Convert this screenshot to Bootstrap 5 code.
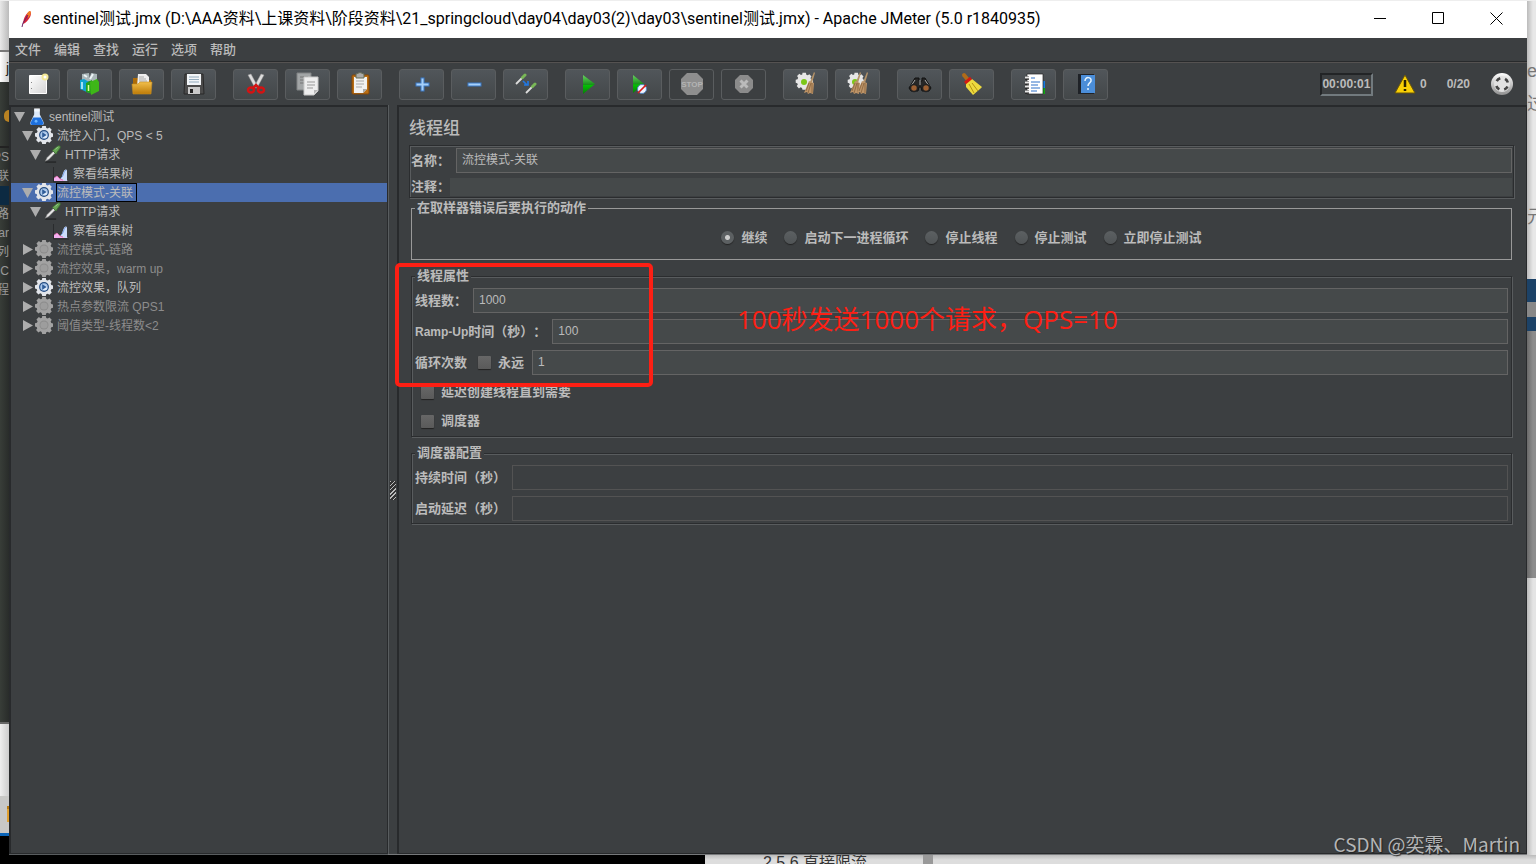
<!DOCTYPE html>
<html lang="zh-CN">
<head>
<meta charset="utf-8">
<meta name="viewport" content="width=device-width, initial-scale=1">
<title>sentinel测试.jmx - Apache JMeter</title>
<link href="https://cdn.jsdelivr.net/npm/bootstrap@5.3.0/dist/css/bootstrap.min.css" rel="stylesheet">
<style>
  :root { --bg:#3c3f41; --field:#45494a; --line:#646464; --dark:#282a2c; --ink:#bbb; }
  body { font-family:"Liberation Sans","Noto Sans CJK SC",sans-serif; font-size:13px; line-height:18px; color:var(--ink); background:#ddd; text-spacing-trim:space-all; font-feature-settings:"chws" 0; }
  button, input { font-family:inherit; }
  .desktop { display:grid; grid-template-columns:9px minmax(0,1fr) 9px; grid-template-rows:1px minmax(0,1fr) 9px; }
  .desk-top { grid-column:1 / -1; background:#eee; }
  .desk-bottom { grid-column:1 / -1; background:linear-gradient(#bbb,#ddd 5px); color:#333; }
  .desk-black { width:705px; background:#000; }
  .desk-note { font-size:16px; line-height:16px; margin-left:58px; width:160px; }
  .desk-bar { width:10px; background:#999; }
  .edge { white-space:nowrap; font-size:12px; }
  .edge-l { direction:rtl; color:#999; }
  .e-paper { height:49px; background:linear-gradient(90deg,#e8e8e8,#bbb); }
  .e-tab { height:32px; padding-top:8px; background:linear-gradient(90deg,#fff,#ccc); border-top:2px solid #777; color:#222; font-size:14px; line-height:16px; }
  .e-dark { height:642px; background:linear-gradient(90deg,#383d38,#292c2a); border-bottom:2px solid #666; }
  .e-tools { height:66px; border-bottom:2px solid #222; padding-top:28px; line-height:19px; }
  .e-orb { height:12px; margin-left:4px; background:#b98222; border-radius:6px 0 0 6px; }
  .e-row { height:19px; line-height:19px; }
  .e-row.on { background:#0c2a42; }
  .e-light { height:72px; background:linear-gradient(90deg,#eee,#ccc); }
  .e-task { height:40px; background:#c8c8c6; border-bottom:3px solid #0a64b8; padding:10px 0 0 7px; }
  .e-task div { height:16px; background:#e0a030; border-top:3px solid #b87a10; }
  .r-page { height:278px; background:linear-gradient(90deg,#bbb,#e8e8e8 6px); color:#777; font-size:18px; line-height:24px; padding-top:58px; }
  .r-page div { height:33px; }
  .r-page div + div + div { padding-top:80px; height:110px; }
  .r-blue { height:23px; background:#1c4267; }
  .r-gap { height:15px; background:#888; }
  .r-gray { height:247px; background:linear-gradient(90deg,#6a6a6a,#8c8c8c 6px); }
  .r-blue2 { height:14px; }
  .r-last { background:linear-gradient(90deg,#bbb,#e4e4e4 6px); }

  .app { background:var(--bg); border-bottom:1px solid #77797b; }
  .titlebar { height:37px; background:#fff; color:#000; font-family:Roboto,"Noto Sans CJK SC",sans-serif; font-size:16px; padding:0 2px 2px 10px; }
  .titlebar button { width:58px; height:34px; border:0; background:none; padding:0; }
  .titlebar svg { display:block; margin:auto; }
  .menus { height:24px; gap:13px; padding-left:6px; border-bottom:1px solid var(--dark); }
  .menus button { border:0; background:none; padding:0; color:var(--ink); font-weight:500; line-height:20px; }
  .toolbar { height:43px; border-top:1px solid #555251; padding:0 13px 0 6px; gap:17px; }
  .toolbar .grp { gap:7px; }
  .tool { width:45px; height:31px; padding:0; border:1px solid #5a5d5f; border-radius:3px; background:linear-gradient(#51565a,#434749); display:flex; align-items:center; justify-content:center; }
  .tool:disabled { background:none; }
  .tool svg { width:24px; height:24px; }
  .status { font-size:12px; font-weight:bold; }
  .clock { border:2px solid; border-color:#222426 #727a7e #727a7e #222426; width:53px; height:23px; line-height:19px; text-align:center; }
  .alert-ico { margin-left:-3px; }
  .tree-pane { width:379px; border:solid var(--dark); border-width:2px 1px 1px 2px; box-shadow:1px 0 #595d5f, 0 1px #595d5f; }
  .split { width:9px; padding-top:22px; }
  .grip { width:6px; height:19px; background:repeating-linear-gradient(135deg,#bbb 0 1px,#333 1px 3px); }
  .main-pane { border:solid var(--dark); border-width:2px 1px 1px 2px; padding:11px 12px 0 10px; }
  .t-row { height:19px; font-size:12px; line-height:18px; white-space:nowrap; }
  .t-row.sel { background:#4b6eaf; }
  .t-row.off { color:#8c8c8c; }
  .t-row .tri { width:11px; height:11px; fill:#adadad; }
  .t-row .ico { width:22px; height:19px; margin-right:1px; }
  .t-row .txt { padding-right:3px; border:1px solid transparent; height:19px; }
  .t-row.sel .txt { border-color:#000; }
  .lv0 { padding-left:3px; } .lv1 { padding-left:11px; } .lv2 { padding-left:19px; } .lv3 { padding-left:38px; }

  h1 { font-size:17px; line-height:22px; font-weight:500; margin:0 0 5px; }
  .etched { border:1px solid #2b2d2f; box-shadow:1px 1px #595c5e, inset 1px 1px #595c5e; }
  .etched > legend { background:var(--bg); }
  .head-box { padding:2px 1px 1px; margin-bottom:1px; }
  .f-row { font-weight:bold; display:flex; align-items:center; height:25px; white-space:nowrap; }
  .f-row.low { height:18px; margin-top:5px; }
  .f-row label { font-weight:bold; }
  .f-in { flex:1 1 0; min-width:0; align-self:stretch; border:1px solid var(--line); border-radius:0; background:var(--field); color:var(--ink); font-size:12px; padding:0 5px 2px; margin-left:6px; }
  .f-in.flat { border:0; margin-left:0; }
  .f-in.none { background:none; border-color:#535353; }
  .grp-box { margin:0 2px; padding:3px 3px 2px; min-width:0; }
  .grp-box legend { float:none; width:auto; margin:0; padding:0 2px; font-size:13px; line-height:18px; font-weight:bold; }
  .plain { border:1px solid #999; padding-top:0; }
  .spaced { margin-top:7px; }
  .stack { gap:6px; display:flex; flex-direction:column; }
  .checks { gap:3px; padding:4px 6px 0; }
  .radios { gap:17px; height:40px; padding-top:1px; }
  .radios label, .chk { display:flex; align-items:center; gap:7px; font-weight:bold; }
  .radios input, .chk input { appearance:none; width:13px; height:13px; margin:0; background:linear-gradient(#5c6062,#505456); box-shadow:0 1px 1px #222; }
  .radios input { border-radius:50%; }
  .radios input:checked { background:radial-gradient(#ccc 0 2px,#5c6062 3px); }
  .chk input { background:linear-gradient(#676767,#5a5a5a); border-radius:1px; }
  .forever { margin:0 2px 0 11px; }
  .mark-box { position:absolute; left:-14px; top:-4px; width:258px; height:124px; border:4px solid #fd1f14; border-radius:5px; pointer-events:none; }
  .mark-text { position:absolute; left:328px; top:34px; color:#fd1f14; font:26px/36px "Open Sans","Noto Sans CJK SC",sans-serif; white-space:nowrap; pointer-events:none; }
  .watermark { position:absolute; right:7px; bottom:-4px; color:#b4b5b6; font:19px/28px "Noto Sans CJK SC",sans-serif; text-shadow:1px 1px 1px #222; }
</style>
</head>
<body>
<svg width="0" height="0" class="position-absolute" aria-hidden="true">
  <defs>
    <linearGradient id="gPaper" x2="1" y2="1"><stop stop-color="#fff"/><stop offset="1" stop-color="#d4d4d4"/></linearGradient>
    <linearGradient id="gGold" x2="0" y2="1"><stop stop-color="#f2bf4b"/><stop offset="1" stop-color="#bd7b08"/></linearGradient>
    <linearGradient id="gGreen" x2="0" y2="1"><stop stop-color="#68d060"/><stop offset=".5" stop-color="#18921a"/><stop offset=".55" stop-color="#04c004"/><stop offset="1" stop-color="#087c08"/></linearGradient>
    <linearGradient id="gBall" x2="0" y2="1"><stop stop-color="#fff"/><stop offset="1" stop-color="#909090"/></linearGradient>
    <path id="teeth" d="M8 0h4l.5 2.200 1.600.700 2-1.300 2.500 2.700-1.200 1.900.700 1.600 2.300.500v3.600l-2.300.600-.700 1.600 1.200 2-2.600 2.600-1.900-1.300-1.600.700L12 20H8l-.600-2.300-1.600-.700-2 1.300-2.600-2.700 1.300-2-.700-1.500L0 11.600V8l2.200-.600.700-1.600-1.300-2 2.700-2.600 1.900 1.300 1.500-.600z"/>
    <symbol id="gear" viewBox="0 0 20 20"><use href="#teeth" fill="#e2e5ea"/><circle cx="10" cy="10" r="5.500" fill="#234b80"/><circle cx="10" cy="10" r="4.200" fill="#a9c6ea"/><circle cx="11" cy="11" r="2.600" fill="#dfebfa"/><path d="M8 7l5 3-5 3z" fill="#2f5c98"/></symbol>
    <symbol id="gearOff" viewBox="0 0 20 20"><use href="#teeth" fill="#a2a2a2"/><circle cx="10" cy="10" r="5" fill="#8b8b8b"/><circle cx="10" cy="10" r="4" fill="#9d9d9d"/></symbol>
    <symbol id="drop" viewBox="0 0 20 20"><path d="M2 19h12" stroke="#292b2c" stroke-width="2"/><path d="M2 18l2-4 7-7 2 2-7 7z" fill="#e5e5e5" stroke="#777" stroke-width=".6"/><path d="M10 6l4 4 1-2 3-4c2-3-1-4-3-2l-4 3z" fill="#67a455" stroke="#3e7134"/><path d="M13 5l3-3" stroke="#a3d797"/></symbol>
    <symbol id="chart" viewBox="0 0 17 17"><path d="M1.500 1v15H17" fill="none" stroke="#292b2d"/><path d="M2 15v-3l3-2 3 3 3-1 5 3z" fill="#f5b3f3"/><path d="M8 13c3-1 2-5 4-8 1-2 3-2 3 0v10H9z" fill="#cbdcfb"/><path d="M3 15v-3l2-2 3 3 6 2z" fill="#f3b0f0"/><path d="M2 12l3-2 3 3 3 1" fill="none" stroke="#d9609d" stroke-width=".7"/><path d="M9 12c3-2 2-6 5-8" fill="none" stroke="#7aa2e8"/></symbol>
    <symbol id="flask" viewBox="0 0 16 18"><path d="M5 1h6v6l4 8q1 2-1 3H2q-2-1-1-3l4-8z" fill="#dce9fa"/><path d="M4 10h8l3 6q0 2-2 2H3q-2 0-2-2z" fill="#1e70dd"/><path d="M5 1h6M5 3h6" stroke="#fff"/><circle cx="7" cy="14" r="1.500" fill="#6ab4ff"/></symbol>
    <symbol id="down" viewBox="0 0 11 11"><path d="M0 1h11L5.500 11z"/></symbol>
    <symbol id="right" viewBox="0 0 11 11"><path d="M1 0v11l10-5.500z"/></symbol>
    <symbol id="broom" viewBox="0 0 12 24"><path d="M10 0l1 1-3 10-2-1z" fill="#b49369"/><path d="M5 9l5 2-1 11-3-1-2 1-1-2-3 1z" fill="#bd9468"/><path d="M5 11L2 19M7 11l-3 10M8 11v10" stroke="#805b37" stroke-width=".7"/></symbol>
    <symbol id="dropper" viewBox="0 0 12 12"><path d="M1 11l7-7" stroke="#ddd" stroke-width="1.800"/><path d="M7.500 4.500l2.500-2.500" stroke="#79b757" stroke-width="3" stroke-linecap="round"/></symbol>
  </defs>
</svg>

<div class="desktop vh-100 overflow-hidden">
  <div class="desk-top"></div>
  <div class="edge edge-l overflow-hidden" aria-hidden="true">
    <div class="e-paper"></div><div class="e-tab">j</div>
    <div class="e-dark">
      <div class="e-tools"><div class="e-orb"></div></div>
      <div class="e-row">PS</div><div class="e-row">联</div><div class="e-row on"></div><div class="e-row">路</div><div class="e-row">ar</div><div class="e-row">列</div><div class="e-row">C</div><div class="e-row">程</div>
    </div>
    <div class="e-light"></div><div class="e-task"><div></div></div><div class="bg-black h-100"></div>
  </div>

  <div class="app d-flex flex-column position-relative">
    <header class="titlebar d-flex align-items-center">
      <svg width="16" height="20" viewBox="0 0 16 20" class="me-2"><path d="M4 15C4 10 7 4 11 2c2 2 1 7-5 12z" fill="#d52238"/><path d="M8 5c1-2 2-3 3-3 2 1 0 5-2 7z" fill="#f08022"/><path d="M3 18l1-4 5-8" fill="none" stroke="#682568"/></svg>
      <span class="flex-grow-1 text-nowrap">sentinel测试.jmx (D:\AAA资料\上课资料\阶段资料\21_springcloud\day04\day03(2)\day03\sentinel测试.jmx) - Apache JMeter (5.0 r1840935)</span>
      <button type="button" aria-label="最小化"><svg width="13" height="13"><path d="M0 6.500h12" stroke="#000"/></svg></button>
      <button type="button" aria-label="最大化"><svg width="13" height="13"><path d="M.5.500h11v11H.5z" fill="none" stroke="#000"/></svg></button>
      <button type="button" aria-label="关闭"><svg width="13" height="13"><path d="M.5.500l12 12m0-12l-12 12" stroke="#000"/></svg></button>
    </header>
    <nav class="menus d-flex align-items-center">
      <button type="button">文件</button><button type="button">编辑</button><button type="button">查找</button><button type="button">运行</button><button type="button">选项</button><button type="button">帮助</button>
    </nav>
    <div class="toolbar d-flex align-items-center">
      <div class="grp d-flex">
        <button class="tool" type="button" aria-label="新建"><svg viewBox="0 0 24 24"><path d="M3.500 3.500h17v18h-17z" fill="url(#gPaper)" stroke="#fff"/><circle cx="19" cy="5" r="3.500" fill="#f3e796"/><circle cx="19" cy="5" r="1.500" fill="#fff"/><path d="M5.500 10v1m0 5v1" stroke="#888"/></svg></button>
        <button class="tool" type="button" aria-label="模板"><svg viewBox="0 0 24 24"><path d="M4 2l7-1 1 8-8 2zM13 1l6 1v9l-8-2z" fill="#aab6b9"/><path d="M6 3l3 2m6-3l-3 5" stroke="#edf5f6" stroke-width="2"/><path d="M2 8l4-1 5 3v11l-9-4z" fill="#11a3cf"/><path d="M4 10v7" fill="none" stroke="#d2f5ff" stroke-width="1.500"/><path d="M8 11l6-3v14l-6-2z" fill="#24a21a"/><path d="M12 10l7-3 2 3v9l-8 4z" fill="#3eb718"/><path d="M10.500 13v6" stroke="#dfff9d" stroke-width="1.500"/></svg></button>
        <button class="tool" type="button" aria-label="打开"><svg viewBox="0 0 24 24"><path d="M3 6h5l2 2h11v13H3z" fill="#ad6c08"/><path d="M8 2h8l3 3v10H7z" fill="#eee"/><path d="M9 5h5m-5 2h7m-7 2h8" stroke="#aaa"/><path d="M2 12h6l2-2h12l-1 12H3z" fill="url(#gGold)" stroke="#c88d20" stroke-width=".6"/></svg></button>
        <button class="tool" type="button" aria-label="保存"><svg viewBox="0 0 24 24"><path d="M3 2h18l1 20H2z" fill="#4b4b4b" stroke="#292929"/><path d="M5 2h14v11H5z" fill="#f2f5f8"/><path d="M7 5h10M7 7.500h10M7 10h10" stroke="#93abbd"/><path d="M6 15h12v7H6z" fill="#c9c9c9"/><path d="M8 17h3v4H8z" fill="#222"/></svg></button>
      </div>
      <div class="grp d-flex">
        <button class="tool" type="button" aria-label="剪切"><svg viewBox="0 0 24 24"><path d="M4 3l3-1 7 13-3 1zM20 3l-3-1-7 13 3 1z" fill="#ddd" stroke="#999" stroke-width=".5"/><ellipse cx="7" cy="18" rx="3" ry="2.600" fill="none" stroke="#d41313" stroke-width="2.500"/><ellipse cx="17" cy="18" rx="3" ry="2.600" fill="none" stroke="#d41313" stroke-width="2.500"/><path d="M9 16l3-3 3 3" fill="none" stroke="#d41313" stroke-width="2.500"/></svg></button>
        <button class="tool" type="button" aria-label="复制"><svg viewBox="0 0 24 24"><path d="M1 1h14v17H1z" fill="#a2a5a6" stroke="#808384"/><path d="M4 5h8M4 8h5M4 11h5" stroke="#777"/><path d="M8 5h14v14l-4 4H8z" fill="#eee" stroke="#c8c8c8"/><path d="M11 10h8m-8 3h8m-8 3h6" stroke="#999"/><path d="M18 22v-4h4z" fill="#b8b8b8"/></svg></button>
        <button class="tool" type="button" aria-label="粘贴"><svg viewBox="0 0 24 24"><rect x="4" y="3" width="17" height="19" rx="1" fill="#b86e15" stroke="#854707"/><path d="M6 5h13v12l-4 4H6z" fill="#f2f2f2"/><path d="M8 2q4-3 8 0v4H8z" fill="#aaa" stroke="#656b55"/><path d="M8 9h8m-8 3h8m-8 3h6" stroke="#aaa"/><path d="M15 21v-4h4z" fill="#aaa"/></svg></button>
      </div>
      <div class="grp d-flex">
        <button class="tool" type="button" aria-label="展开"><svg viewBox="0 0 24 24"><path d="M12.500 5.500v14M5.500 12.500h14" stroke="#3b78c4" stroke-width="4"/><path d="M12.500 6.500v12M6.500 12.500h12" stroke="#a6d0fa" stroke-width="2"/></svg></button>
        <button class="tool" type="button" aria-label="折叠"><svg viewBox="0 0 24 24"><path d="M5.500 12.500h14" stroke="#3b78c4" stroke-width="4"/><path d="M6.500 12.500h12" stroke="#a6d0fa" stroke-width="2"/></svg></button>
        <button class="tool" type="button" aria-label="切换"><svg viewBox="0 0 24 24"><use href="#dropper" x="1" y="1" width="12" height="12"/><use href="#dropper" x="11" y="10" width="12" height="12"/><path d="M9 9l4 4m1-4v4h-4" fill="none" stroke="#2277e0" stroke-width="1.700"/></svg></button>
      </div>
      <div class="grp d-flex">
        <button class="tool" type="button" aria-label="启动"><svg viewBox="0 0 24 24"><path d="M7 3l12 9L7 22z" fill="url(#gGreen)"/></svg></button>
        <button class="tool" type="button" aria-label="不停顿开始"><svg viewBox="0 0 24 24"><path d="M5 3l11 9L5 21z" fill="url(#gGreen)"/><circle cx="14" cy="17" r="4.500" fill="#eef5ff" stroke="#5284c0"/><path d="M10 21l8-8" stroke="#d91b18" stroke-width="1.700"/></svg></button>
        <button class="tool" type="button" aria-label="停止" disabled><svg viewBox="0 0 24 24"><path d="M7 1h10l6 6v10l-6 6H7l-6-6V7z" fill="#8e8e8e"/><text x="12" y="15" text-anchor="middle" font-size="8" font-weight="bold" fill="#b4b4b4">STOP</text></svg></button>
        <button class="tool" type="button" aria-label="关闭测试" disabled><svg viewBox="0 0 24 24"><path d="M8 3h8l5 5v8l-5 5H8l-5-5V8z" fill="#8b8b8b"/><path d="M8.500 8.500l7 7m0-7l-7 7" stroke="#bbb" stroke-width="3"/></svg></button>
      </div>
      <div class="grp d-flex">
        <button class="tool" type="button" aria-label="清除"><svg viewBox="0 0 24 24"><use href="#teeth" x="2" y="1" fill="#e6e6e6" transform="scale(.85)"/><circle cx="10" cy="10" r="3" fill="#7cc718"/><use href="#broom" x="9" y="0" width="14" height="24"/></svg></button>
        <button class="tool" type="button" aria-label="清除全部"><svg viewBox="0 0 24 24"><use href="#teeth" x="2" y="1" fill="#e6e6e6" transform="scale(.85)"/><circle cx="9" cy="10" r="3" fill="#7cc718"/><use href="#broom" x="4" y="0" width="12" height="24"/><use href="#broom" x="11" y="0" width="12" height="24"/></svg></button>
      </div>
      <div class="grp d-flex">
        <button class="tool" type="button" aria-label="查找"><svg viewBox="0 0 24 24"><path d="M7 6h4v3h3V6h3l6 10-2 3h-7l-1-4h-2l-1 4H3l-2-3z" fill="#272727" stroke="#111"/><path d="M7 8l-4 6m14-6l4 6m-9-6v5" stroke="#aaa"/><circle cx="6" cy="16" r="3.500" fill="#9c6033" stroke="#222" stroke-width="1.500"/><circle cx="18" cy="16" r="3.500" fill="#9c6033" stroke="#222" stroke-width="1.500"/></svg></button>
        <button class="tool" type="button" aria-label="重置搜索"><svg viewBox="0 0 24 24"><path d="M4 3l4 5" stroke="#b06b19" stroke-width="4" stroke-linecap="round"/><path d="M6 10l6-3 10 8q-3 3-9 8l-7-8z" fill="#edda3f"/><path d="M9 12l5 9m-2-10l6 8" stroke="#b69410"/><path d="M5 11l6-5" stroke="#d31911" stroke-width="3"/></svg></button>
      </div>
      <div class="grp d-flex">
        <button class="tool" type="button" aria-label="函数助手"><svg viewBox="0 0 24 24"><path d="M19 9h4v7h-4z" fill="#167be1"/><path d="M19 16h4v6h-4z" fill="#11a815"/><path d="M5 2h16v20H5z" fill="#fff" stroke="#222" stroke-width=".7"/><path d="M3 6h4M3 11h4M3 15h4M3 20h4" stroke="#222" stroke-width="3.500"/><path d="M3 5.500h4M3 10.500h4M3 14.500h4M3 19.500h4" stroke="#e8e8e8" stroke-width="2"/><path d="M9 6h4m-4 4h9m-9 3h7m-7 3h9m-9 3h6" stroke="#2f70c7"/></svg></button>
        <button class="tool" type="button" aria-label="帮助"><svg viewBox="0 0 24 24"><path d="M4 2h16v20H4z" fill="#1f2227"/><path d="M7 3h14v18H7z" fill="#4b8ed9"/><path d="M11 9c0-5 7-4 6 0-.5 2-3 2-3 5m0 2v2" fill="none" stroke="#e5f4ff" stroke-width="1.500"/></svg></button>
      </div>
      <div class="status d-flex align-items-center ms-auto">
        <span class="clock me-4">00:00:01</span>
        <svg width="22" height="20" viewBox="0 0 22 20" class="alert-ico me-1"><path d="M11 1l10 18H1z" fill="#f8cf05" stroke="#6a5608" stroke-linejoin="round"/><path d="M11 6v7m0 2v2" stroke="#292100" stroke-width="2.500"/></svg>
        <span class="me-3">0</span><span class="me-3 ms-1">0/20</span>
        <svg width="24" height="24" viewBox="0 0 24 24" class="ms-1"><circle cx="12" cy="12" r="11" fill="url(#gBall)"/><circle cx="12" cy="12" r="8" fill="#e2e2e2"/><circle cx="12" cy="12" r="6" fill="none" stroke="#444" stroke-width="2.600" stroke-dasharray="4.400 5.020" stroke-dashoffset="-2.500"/></svg>
      </div>
    </div>

    <div class="d-flex flex-grow-1">
      <aside class="tree-pane flex-shrink-0">
        <div class="t-row lv0 d-flex align-items-center"><svg class="tri"><use href="#down"/></svg><svg class="ico"><use href="#flask" x="3" y="1" width="18" height="17"/></svg><span class="txt">sentinel测试</span></div>
        <div class="t-row lv1 d-flex align-items-center"><svg class="tri"><use href="#down"/></svg><svg class="ico"><use href="#gear" x="2" width="18" height="18"/></svg><span class="txt">流控入门，QPS &lt; 5</span></div>
        <div class="t-row lv2 d-flex align-items-center"><svg class="tri"><use href="#down"/></svg><svg class="ico"><use href="#drop" x="2" width="19" height="18"/></svg><span class="txt">HTTP请求</span></div>
        <div class="t-row lv3 d-flex align-items-center"><svg class="ico"><use href="#chart" x="3" y="2" width="17" height="17"/></svg><span class="txt">察看结果树</span></div>
        <div class="t-row lv1 sel d-flex align-items-center"><svg class="tri"><use href="#down"/></svg><svg class="ico"><use href="#gear" x="2" width="18" height="18"/></svg><span class="txt">流控模式-关联</span></div>
        <div class="t-row lv2 d-flex align-items-center"><svg class="tri"><use href="#down"/></svg><svg class="ico"><use href="#drop" x="2" width="19" height="18"/></svg><span class="txt">HTTP请求</span></div>
        <div class="t-row lv3 d-flex align-items-center"><svg class="ico"><use href="#chart" x="3" y="2" width="17" height="17"/></svg><span class="txt">察看结果树</span></div>
        <div class="t-row lv1 off d-flex align-items-center"><svg class="tri"><use href="#right"/></svg><svg class="ico"><use href="#gearOff" x="2" width="18" height="18"/></svg><span class="txt">流控模式-链路</span></div>
        <div class="t-row lv1 off d-flex align-items-center"><svg class="tri"><use href="#right"/></svg><svg class="ico"><use href="#gearOff" x="2" width="18" height="18"/></svg><span class="txt">流控效果，warm up</span></div>
        <div class="t-row lv1 d-flex align-items-center"><svg class="tri"><use href="#right"/></svg><svg class="ico"><use href="#gear" x="2" width="18" height="18"/></svg><span class="txt">流控效果，队列</span></div>
        <div class="t-row lv1 off d-flex align-items-center"><svg class="tri"><use href="#right"/></svg><svg class="ico"><use href="#gearOff" x="2" width="18" height="18"/></svg><span class="txt">热点参数限流 QPS1</span></div>
        <div class="t-row lv1 off d-flex align-items-center"><svg class="tri"><use href="#right"/></svg><svg class="ico"><use href="#gearOff" x="2" width="18" height="18"/></svg><span class="txt">阈值类型-线程数&lt;2</span></div>
      </aside>
      <div class="split flex-shrink-0 d-flex align-items-center justify-content-center"><div class="grip"></div></div>

      <main class="main-pane flex-grow-1">
        <h1>线程组</h1>
        <div class="etched head-box">
          <div class="f-row"><label for="name">名称：</label><input class="f-in" id="name" value="流控模式-关联"></div>
          <div class="f-row low"><label for="note">注释：</label><input class="f-in flat" id="note"></div>
        </div>
        <fieldset class="grp-box plain">
          <legend>在取样器错误后要执行的动作</legend>
          <div class="radios d-flex justify-content-center">
            <label><input type="radio" name="act" checked>继续</label>
            <label><input type="radio" name="act">启动下一进程循环</label>
            <label><input type="radio" name="act">停止线程</label>
            <label><input type="radio" name="act">停止测试</label>
            <label><input type="radio" name="act">立即停止测试</label>
          </div>
        </fieldset>
        <div class="position-relative spaced">
          <fieldset class="grp-box etched">
            <legend>线程属性</legend>
            <div class="stack">
              <div class="f-row"><label for="threads">线程数：</label><input class="f-in" id="threads" value="1000"></div>
              <div class="f-row"><label for="ramp"><span class="status">Ramp-Up</span>时间（秒）：</label><input class="f-in" id="ramp" value="100"></div>
              <div class="f-row"><label for="loops">循环次数</label><label class="chk forever"><input type="checkbox">永远</label><input class="f-in" id="loops" value="1"></div>
            </div>
            <div class="stack checks">
              <label class="chk py-1"><input type="checkbox">延迟创建线程直到需要</label>
              <label class="chk py-1"><input type="checkbox">调度器</label>
            </div>
          </fieldset>
          <div class="mark-box"></div>
          <div class="mark-text">100秒发送1000个请求，QPS=10</div>
        </div>
        <fieldset class="grp-box etched spaced">
          <legend>调度器配置</legend>
          <div class="stack">
            <div class="f-row"><label for="dur">持续时间（秒）</label><input class="f-in none" id="dur"></div>
            <div class="f-row"><label for="delay">启动延迟（秒）</label><input class="f-in none" id="delay"></div>
          </div>
        </fieldset>
      </main>
    </div>
    <div class="watermark">CSDN @奕霖、Martin</div>
  </div>

  <div class="edge overflow-hidden d-flex flex-column" aria-hidden="true">
    <div class="r-page"><div>e</div><div>过</div><div>元</div></div>
    <div class="r-blue"></div><div class="r-gap"></div><div class="r-blue r-blue2"></div><div class="r-gray"></div><div class="r-last flex-grow-1"></div>
  </div>
  <div class="desk-bottom d-flex overflow-hidden" aria-hidden="true"><div class="desk-black"></div><div class="desk-note">2.5.6 直接限流</div><div class="desk-bar"></div></div>
</div>
<script src="https://cdn.jsdelivr.net/npm/bootstrap@5.3.0/dist/js/bootstrap.bundle.min.js"></script>
</body>
</html>
